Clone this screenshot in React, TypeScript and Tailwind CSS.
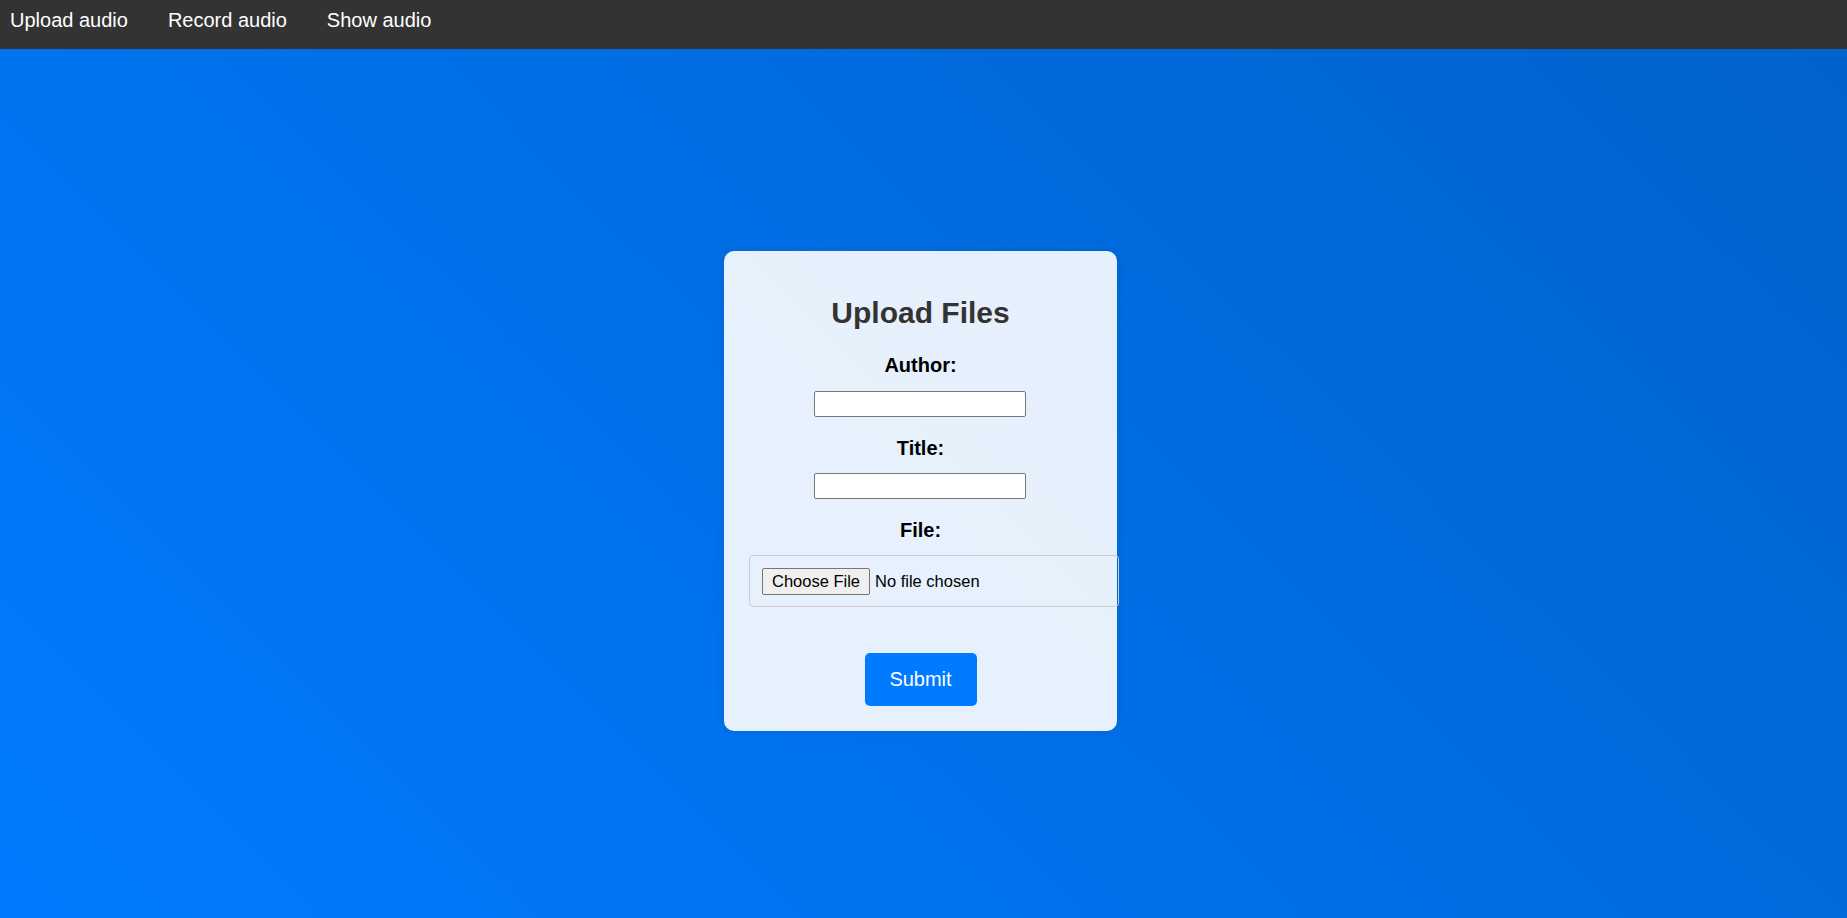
export default function App() {
  return (
    <div className="min-h-screen flex flex-col font-['Liberation_Sans',Arial,sans-serif]">
      <nav className="h-[49px] bg-[#333333] flex items-start pt-[9px] px-[10px] gap-[40px] text-white text-[20px] leading-[23px]">
        <a href="#">Upload audio</a>
        <a href="#">Record audio</a>
        <a href="#">Show audio</a>
      </nav>
      <main className="h-[869px] flex justify-center items-start pt-[202px] pr-[6px] bg-[linear-gradient(45deg,#007bff,#0062cc)]">
        <form
          onSubmit={(e) => e.preventDefault()}
          className="w-[393px] pt-[45px] pb-[25px] rounded-[10px] bg-white/90 shadow-[0_0_10px_rgba(0,0,0,0.1)] flex flex-col items-center"
        >
          <h2 className="text-[30px] leading-[34px] font-bold text-[#333333]">Upload Files</h2>
          <label className="mt-[24px] text-[20px] leading-[23px] font-bold text-black">Author:</label>
          <input type="text" className="mt-[14px] mr-[1px] w-[212px] h-[26px] border border-[#767676] rounded-[2px] bg-white px-[2px] text-[16px]" />
          <label className="mt-[20px] text-[20px] leading-[23px] font-bold text-black">Title:</label>
          <input type="text" className="mt-[13px] mr-[1px] w-[212px] h-[26px] border border-[#767676] rounded-[2px] bg-white px-[2px] text-[16px]" />
          <label className="mt-[20px] text-[20px] leading-[23px] font-bold text-black">File:</label>
          <div className="mt-[13px] self-start ml-[25px] w-[370px] h-[52px] shrink-0 border border-[#cccccc] rounded-[4px] pl-[12px] flex items-center text-[16.5px] leading-[19px] text-black">
            <button type="button" className="w-[108px] h-[27px] border border-[#767676] bg-[#efefef] rounded-[2px] text-[16.5px] text-black">
              Choose File
            </button>
            <span className="ml-[5px]">No file chosen</span>
          </div>
          <button type="submit" className="mt-[46px] w-[112px] h-[53px] bg-[#007bff] text-white rounded-[5px] text-[20px] leading-[23px]">
            Submit
          </button>
        </form>
      </main>
    </div>
  );
}
